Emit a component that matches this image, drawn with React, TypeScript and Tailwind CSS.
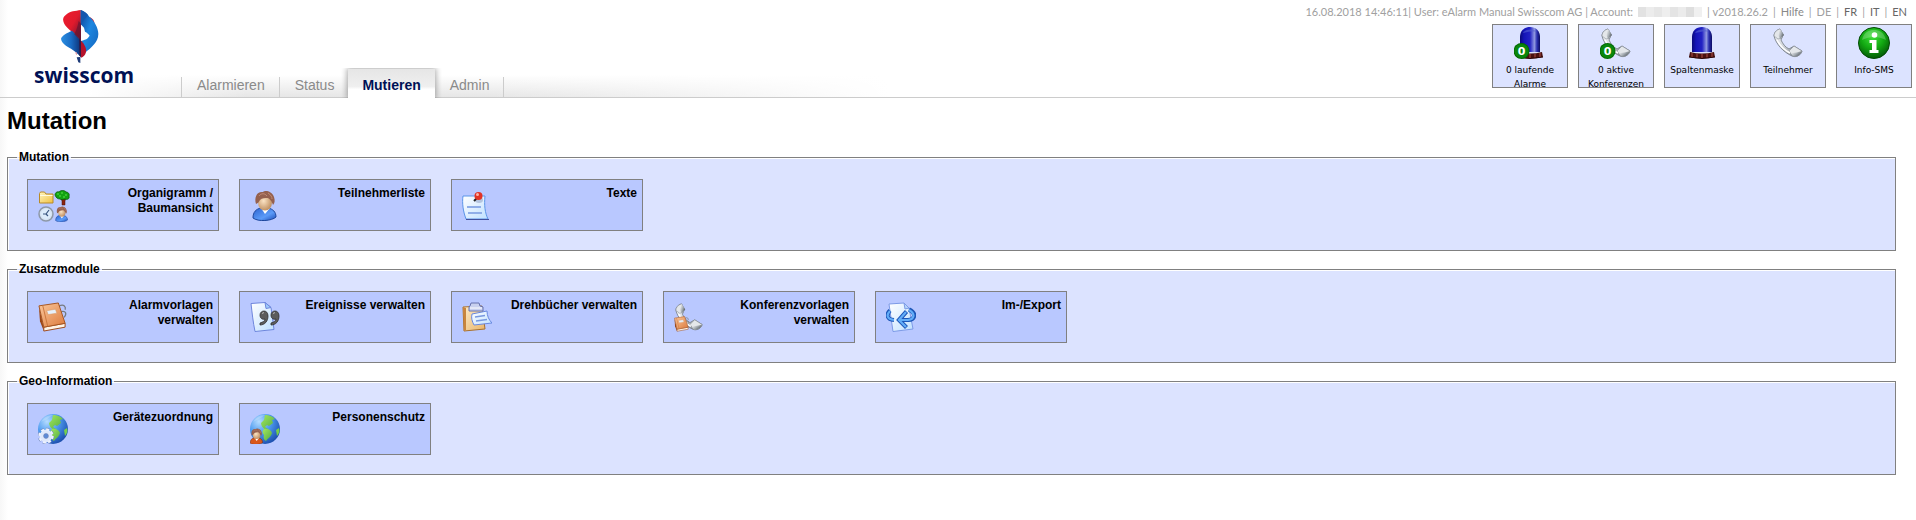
import React from "react";

const sans = "font-['Liberation_Sans',Arial,sans-serif]";

// gradients shared by all icons
function IconDefs() {
  return (
    <svg className="absolute h-0 w-0" aria-hidden="true">
      <defs>
        <linearGradient id="beacon" x1="0" x2="1" y1="0" y2="0">
          <stop offset="0" stopColor="#0a0a78" />
          <stop offset="0.2" stopColor="#1414b8" />
          <stop offset="0.5" stopColor="#2222c4" />
          <stop offset="0.72" stopColor="#8f97e0" />
          <stop offset="0.85" stopColor="#2a2fb0" />
          <stop offset="1" stopColor="#0b0b62" />
        </linearGradient>
        <linearGradient id="metal" x1="0" x2="1" y1="0" y2="1">
          <stop offset="0" stopColor="#ffffff" />
          <stop offset="0.45" stopColor="#d3d7dc" />
          <stop offset="1" stopColor="#6d757d" />
        </linearGradient>
        <linearGradient id="cup" x1="0" x2="1" y1="0.2" y2="0.8">
          <stop offset="0" stopColor="#f6f7f8" />
          <stop offset="0.5" stopColor="#a4abb1" />
          <stop offset="1" stopColor="#434a50" />
        </linearGradient>
        <radialGradient id="green" cx="0.45" cy="0.3" r="0.75">
          <stop offset="0" stopColor="#3fe03a" />
          <stop offset="0.5" stopColor="#12a812" />
          <stop offset="1" stopColor="#024d04" />
        </radialGradient>
        <radialGradient id="globe" cx="0.3" cy="0.25" r="0.85">
          <stop offset="0" stopColor="#b5dcff" />
          <stop offset="0.45" stopColor="#4f9cf0" />
          <stop offset="1" stopColor="#1747a8" />
        </radialGradient>
        <linearGradient id="land" x1="0" x2="1" y1="0" y2="1">
          <stop offset="0" stopColor="#a4e85c" />
          <stop offset="1" stopColor="#4faa45" />
        </linearGradient>
        <linearGradient id="book" x1="0" x2="1" y1="0" y2="1">
          <stop offset="0" stopColor="#fbc89c" />
          <stop offset="1" stopColor="#dc7a3c" />
        </linearGradient>
        <linearGradient id="paper" x1="0" x2="1" y1="0" y2="1">
          <stop offset="0" stopColor="#ffffff" />
          <stop offset="1" stopColor="#bfe0ff" />
        </linearGradient>
        <linearGradient id="shirt" x1="0" x2="1" y1="0" y2="1">
          <stop offset="0" stopColor="#2c63d0" />
          <stop offset="0.6" stopColor="#5c9bf8" />
          <stop offset="1" stopColor="#1c4cb8" />
        </linearGradient>
        <radialGradient id="skin" cx="0.4" cy="0.4" r="0.7">
          <stop offset="0" stopColor="#fbe3c4" />
          <stop offset="1" stopColor="#b98655" />
        </radialGradient>
        <linearGradient id="folder" x1="0" x2="1" y1="0" y2="1">
          <stop offset="0" stopColor="#fff6c0" />
          <stop offset="1" stopColor="#f0c040" />
        </linearGradient>
        <linearGradient id="board" x1="0" x2="1" y1="0" y2="1">
          <stop offset="0" stopColor="#fdeccb" />
          <stop offset="1" stopColor="#e8b468" />
        </linearGradient>
        <linearGradient id="logoRed" x1="0" x2="1" y1="0" y2="1">
          <stop offset="0" stopColor="#ee1c2e" />
          <stop offset="0.5" stopColor="#e01a2c" />
          <stop offset="1" stopColor="#5c1330" />
        </linearGradient>
        <linearGradient id="logoBlue" x1="0" x2="1" y1="0" y2="1">
          <stop offset="0" stopColor="#0d3f96" />
          <stop offset="0.45" stopColor="#1c86e0" />
          <stop offset="1" stopColor="#1260b8" />
        </linearGradient>
        <linearGradient id="logoLeft" x1="0" x2="1" y1="0" y2="0">
          <stop offset="0" stopColor="#2b8fe2" />
          <stop offset="0.5" stopColor="#1a6cc4" />
          <stop offset="1" stopColor="#0c2f74" />
        </linearGradient>
      </defs>
    </svg>
  );
}

function Logo() {
  return (
    <svg className="h-[55px] w-10" viewBox="180 24 120 165" aria-hidden="true">
      <path d="M268 48c10 4 16 12 15 20l-8 2z" fill="#c41c34" />
      <path
        d="M242 27c10 4 18 8 26 20 14 12 27 32 27 52 0 24-22 42-40 56-5 5-9 9-12 14v-49c8-2 15-4 20-8l6-8c-2-4-8-9-14-12l-3-12-10-10z"
        fill="url(#logoBlue)"
      />
      <path d="M242 27c-16 3-32 3-44 14-8 6-10 12-8 20 4 16 20 26 31 36 9 8 15 14 22 22V70z" fill="url(#logoRed)" />
      <path d="M242 27c10 4 16 8 22 16-8 8-16 18-22 30z" fill="#1457ae" />
      <path d="M216 89c-14 6-30 14-33 24 2 14 16 22 30 30 12 8 22 16 30 26v-50c-8-10-16-20-27-30z" fill="url(#logoLeft)" />
      <path d="M236 60l7 8v52c-8-8-14-14-20-20 6-12 10-24 13-40z" fill="#6a1532" opacity="0.75" />
      <path d="M243 119c10 10 17 22 15 34-2 10-8 15-15 17z" fill="#b5122b" />
      <path d="M237 110l6 9v50l-5-6z" fill="#35163f" opacity="0.8" />
      <path d="M226 152l5 3v8l-4-4z" fill="#e8a0a8" />
      <path d="M230 169l11-1v18l-6-2-2-6z" fill="#1d3a78" />
    </svg>
  );
}

function Badge() {
  return (
    <>
      <circle cx="7.5" cy="24" r="8" fill="#026b04" />
      <circle cx="7.5" cy="24" r="7" fill="#0a870c" />
      <text
        x="7.5"
        y="28"
        textAnchor="middle"
        fontSize="11"
        fontWeight="bold"
        fill="#fff"
        fontFamily="DejaVu Sans, sans-serif"
      >
        0
      </text>
    </>
  );
}

function BeaconShape() {
  return (
    <>
      <path d="M6 25V10C6 4 10 0 16 0s10 4 10 10v15z" fill="url(#beacon)" />
      <path d="M9 6c2-4 10-5 14-1-4-1-9 0-14 1z" fill="#5560d0" opacity="0.6" />
      <path d="M4 25q12 3 24 0l1 5q-13 3-26 0z" fill="#4a1210" />
      <path d="M6 26v4M11 27v4M16 27v4M21 27v4M26 26v4" stroke="#8d3a34" strokeWidth="1.5" />
      <path d="M3 30q13 3 26 0" stroke="#2b0505" fill="none" />
    </>
  );
}

function HandsetShape() {
  return (
    <>
      <path
        d="M8 2C4 3 2 6 2 9c2 8 9 16 18 20 4 2 9-1 10-5l-8-5-5 3c-4-2-6-5-8-9l2-5z"
        fill="url(#metal)"
        stroke="#6e767e"
        strokeWidth="0.8"
      />
      <path d="M8 2l3 5-1 4-4 1-4-3c0-3 2-6 6-7z" fill="#e4e7ea" stroke="#767e86" strokeWidth="0.5" />
      <path d="M8 2l4 6-4 4c-2-3-2-7 0-10z" fill="url(#cup)" />
      <path d="M17 24l5-5 8 5c-1 4-5 6-9 5z" fill="#e4e7ea" stroke="#767e86" strokeWidth="0.5" />
      <path d="M19 26c4 0 7-1 11-2-1 4-5 6-9 5z" fill="url(#cup)" />
      <path d="M5 13c3 6 7 10 13 13" stroke="#fff" strokeWidth="1.5" fill="none" />
    </>
  );
}

function AlarmIcon() {
  return (
    <svg className="h-8 w-8" viewBox="0 0 32 32">
      <BeaconShape />
      <Badge />
    </svg>
  );
}

function ConferenceIcon() {
  return (
    <svg className="h-8 w-8" viewBox="0 0 32 32">
      <HandsetShape />
      <Badge />
    </svg>
  );
}

function BeaconIcon() {
  return (
    <svg className="h-8 w-8" viewBox="0 0 32 32">
      <BeaconShape />
    </svg>
  );
}

function PhoneIcon() {
  return (
    <svg className="h-8 w-8" viewBox="0 0 32 32">
      <HandsetShape />
    </svg>
  );
}

function InfoIcon() {
  return (
    <svg className="h-8 w-8" viewBox="0 0 32 32">
      <circle cx="16" cy="16" r="15.5" fill="url(#green)" stroke="#034a05" />
      <path d="M4 13C6 5 11 3 16 3s10 2 12 10c-8-4-16-4-24 0z" fill="#fff" opacity="0.22" />
      <circle cx="16.5" cy="8" r="2.8" fill="#fff" />
      <path d="M11.500 13h7v10h2v3h-9v-3h2.500v-7h-2.500z" fill="#fff" />
    </svg>
  );
}

function PersonShape({ shirt = "url(#shirt)", line = "#1d469c" }) {
  return (
    <>
      <path d="M4 28c0-6 3-9 8-10h7c5 1 8 4 8 9-4 4-18 5-23 1z" fill={shirt} stroke={line} />
      <path d="M12 18l4 6 5-6z" fill="#fff" />
      <ellipse cx="16" cy="12.500" rx="7" ry="8" fill="url(#skin)" />
      <path
        d="M7 14C5 7 8 1 14 2c2-2 9-1 11 5 1 3 1 6-1 8-1-3-2-5-5-7-3 0-6 0-8 2-1 2-2 3-4 4z"
        fill="#95604e"
      />
      <path d="M10 6c2-3 6-3 8 0M19 3c3 2 4 4 4 6" stroke="#c08a74" fill="none" />
    </>
  );
}

function OrgIcon() {
  return (
    <svg className="h-8 w-8" viewBox="0 0 32 32">
      <path d="M1.500 13V3.500l1-1.500h4l1.500 2h7v9z" fill="url(#folder)" stroke="#b98a28" />
      <path d="M2 5.500h12.500" stroke="#fffbe0" />
      <path d="M23 8l1 3v4h3v-4l1-3z" fill="#8c2410" stroke="#4b1004" strokeWidth="0.5" />
      <path
        d="M17 5c0-2 2-4 4-3 1-2 6-2 7 0 2 0 4 2 3 4 1 3-2 4-4 3-2 1-4 1-5 0-2 0-4-1-5-4z"
        fill="#12a312"
        stroke="#064d06"
        strokeWidth="0.700"
      />
      <path d="M19 4h2M23 3h2M27 5h2M21 6h2M25 7h2" stroke="#5ae04a" />
      <circle cx="8" cy="24" r="7" fill="#d5e2f2" stroke="#8d98a8" strokeWidth="1.500" />
      <circle cx="8" cy="24" r="5" fill="#dcebfb" />
      <path d="M8 24l3-4M8 24H5M8 24l2 2" stroke="#3a5680" strokeWidth="1.200" />
      <g transform="translate(15.500 16) scale(0.52)">
        <PersonShape />
      </g>
    </svg>
  );
}

function PersonIcon() {
  return (
    <svg className="h-8 w-8" viewBox="0 0 32 32">
      <g transform="translate(-1 0)">
        <PersonShape />
      </g>
    </svg>
  );
}

function NoteIcon() {
  return (
    <svg className="h-8 w-8" viewBox="0 0 32 32">
      <path d="M1 6h22c-1 9 0 17 3 23H4C1 21 0 13 1 6z" fill="url(#paper)" stroke="#5b95e8" />
      <path d="M4 29.500h23" stroke="#41509c" />
      <path d="M5 17h14M6 23h14" stroke="#8faee8" strokeWidth="1.800" />
      <ellipse cx="17" cy="10" rx="4" ry="3" fill="#9fb0d0" opacity="0.7" />
      <path d="M12 11l4-4" stroke="#222" strokeWidth="2" />
      <circle cx="16.500" cy="6" r="4" fill="#e23325" />
      <circle cx="15.500" cy="4.500" r="1.500" fill="#ffb2a4" />
    </svg>
  );
}

function BookShape() {
  return (
    <>
      <path d="M22 4c5-2 7 1 6 4M24 10c5-1 6 2 3 6" stroke="#767a80" fill="none" strokeWidth="1.300" />
      <path d="M1 5l5 21v4L2 20z" fill="#9c4718" />
      <path d="M6 30l22-4v-4L6 26z" fill="#fff4e6" stroke="#9c4718" />
      <path d="M1 4l20-3 7 21-22 4z" fill="url(#book)" stroke="#a5541f" />
      <path d="M5 4l5 21" stroke="#c9763e" />
      <path d="M9 9l9-1.500 1.500 4L10.500 13z" fill="#e7f1fb" stroke="#d5955f" strokeWidth="0.500" />
    </>
  );
}

function BookIcon() {
  return (
    <svg className="h-[30px] w-[30px]" viewBox="0 0 31 31">
      <BookShape />
    </svg>
  );
}

function QuoteIcon() {
  return (
    <svg className="h-[30px] w-[30px]" viewBox="0 0 30 30">
      <path d="M1 1.500L15 .5l6 5 3 22L5 29.500C3 20 2 10 1 1.500z" fill="url(#paper)" stroke="#6e86dc" />
      <path d="M15 .5l1 6 5-1z" fill="#9ecbfa" stroke="#6e86dc" />
      <g fill="#5c5c5c" stroke="#303030" strokeWidth="0.800">
        <path d="M10 13c0-5 8-6 8 1 0 5-3 9-8 9v-2c3-1 5-2 5-4-3 1-5-1-5-4z" />
        <path d="M21 13c0-5 8-6 8 1 0 5-3 9-8 9v-2c3-1 5-2 5-4-3 1-5-1-5-4z" />
      </g>
      <path d="M12 11.500l2-1M23 11.500l2-1" stroke="#bbb" />
    </svg>
  );
}

function ClipboardIcon() {
  return (
    <svg className="h-[30px] w-[30px]" viewBox="0 0 30 30">
      <path d="M1 5l19-1 3 23-21 2z" fill="url(#board)" stroke="#a8702c" />
      <path d="M1 5l3 1v22l-2 1z" fill="#c8843c" />
      <path d="M8 4l1-3h8l1 3 3 1v4H7V5z" fill="#c8d0ee" stroke="#6672ae" />
      <path d="M8 6h12" stroke="#fff" />
      <path d="M10 12l15-3c0 5 2 9 5 12l-18 2c-2-4-3-7-2-11z" fill="url(#paper)" stroke="#6888e0" />
      <path d="M13 15l10-1.500M14 19l11-1.500" stroke="#7898e0" strokeWidth="1.300" />
    </svg>
  );
}

function PhoneBookIcon() {
  return (
    <svg className="h-[30px] w-[30px]" viewBox="0 0 32 32">
      <HandsetShape />
      <g transform="translate(0 15) scale(0.54)">
        <BookShape />
      </g>
    </svg>
  );
}

function ExchangeIcon() {
  return (
    <svg className="h-[30px] w-[30px]" viewBox="0 0 30 30">
      <path d="M3 2l15-1 5 5 4 21-20 2.500z" fill="url(#paper)" stroke="#7c9ae6" />
      <path d="M18 1l1 6 4-1z" fill="#b5d6fa" stroke="#7c9ae6" />
      <g fill="none">
        <path
          d="M4 8.500c-4 4-3 9 4 9.500M23 7.500c8 4 6 10-1 10.500h-8M20.500 9.500L13 18l7.500 7.500"
          stroke="#1c56b8"
          strokeWidth="4.200"
        />
        <path
          d="M4 9c-4 4-3 8 4 9M23 8c7 4 5 9.500-1 10h-8M20 10l-7 8 7 7"
          stroke="#62adf8"
          strokeWidth="2.200"
        />
      </g>
    </svg>
  );
}

function GlobeShape() {
  return (
    <>
      <circle cx="15" cy="15" r="15" fill="url(#globe)" />
      <path d="M15 1c4 0 7 1 10 4l-3 1 1 3-4 3-2-1-2 2 3 2-2 1c-3-2-5-4-5-7l3-3z" fill="url(#land)" />
      <path d="M14 15c4-1 7 1 8 4-1 4-4 5-6 8-2-1-3-3-2-6-2-2-2-4 0-6z" fill="url(#land)" />
      <path d="M26 16l3-2c1 3 0 6-2 8z" fill="#74cf4a" />
      <path d="M3 8C6 3 10 1 15 1c-4 3-8 5-12 7z" fill="#fff" opacity="0.2" />
    </>
  );
}

function GlobeGearIcon() {
  return (
    <svg className="h-[30px] w-[30px]" viewBox="0 0 30 30">
      <GlobeShape />
      <circle cx="8" cy="22" r="6.700" fill="none" stroke="#6b80b8" strokeWidth="3" strokeDasharray="3 2.260" />
      <circle cx="8" cy="22" r="4.200" fill="none" stroke="#dfe8fb" strokeWidth="4.400" />
      <circle cx="8" cy="22" r="6.700" fill="none" stroke="#eef3ff" strokeWidth="2" strokeDasharray="3 2.260" />
      <circle cx="8" cy="22" r="2.400" fill="#5b8ad8" stroke="#7286b8" strokeWidth="0.700" />
    </svg>
  );
}

function GlobePersonIcon() {
  return (
    <svg className="h-[30px] w-[30px]" viewBox="0 0 30 30">
      <GlobeShape />
      <g transform="translate(-2 14) scale(0.54)">
        <PersonShape shirt="#d9571a" line="#7c2a08" />
      </g>
    </svg>
  );
}

const tabs = ["Alarmieren", "Status", "Mutieren", "Admin"];

const shortcuts = [
  { label: "0 laufende Alarme", icon: <AlarmIcon /> },
  { label: "0 aktive Konferenzen", icon: <ConferenceIcon /> },
  { label: "Spaltenmaske", icon: <BeaconIcon /> },
  { label: "Teilnehmer", icon: <PhoneIcon /> },
  { label: "Info-SMS", icon: <InfoIcon /> },
];

const groups = [
  {
    title: "Mutation",
    items: [
      { label: "Organigramm / Baumansicht", icon: <OrgIcon /> },
      { label: "Teilnehmerliste", icon: <PersonIcon /> },
      { label: "Texte", icon: <NoteIcon /> },
    ],
  },
  {
    title: "Zusatzmodule",
    items: [
      { label: "Alarmvorlagen verwalten", icon: <BookIcon /> },
      { label: "Ereignisse verwalten", icon: <QuoteIcon /> },
      { label: "Drehbücher verwalten", icon: <ClipboardIcon /> },
      { label: "Konferenzvorlagen verwalten", icon: <PhoneBookIcon /> },
      { label: "Im-/Export", icon: <ExchangeIcon /> },
    ],
  },
  {
    title: "Geo-Information",
    items: [
      { label: "Gerätezuordnung", icon: <GlobeGearIcon /> },
      { label: "Personenschutz", icon: <GlobePersonIcon /> },
    ],
  },
];

const maskColors = [
  "bg-[#e2e2e2]",
  "bg-[#ececec]",
  "bg-[#e6e6e6]",
  "bg-[#eeeeee]",
  "bg-[#e4e4e4]",
  "bg-[#ebebeb]",
  "bg-[#dedede]",
  "bg-[#f0f0f0]",
];

function Tab({ label }: { label: string }) {
  if (label === "Mutieren") {
    return (
      <a
        href="#"
        aria-current="page"
        className="-mb-px flex h-[29px] items-center bg-[linear-gradient(#e6e6e6,#efefef_60%,#fff_70%)] px-[14px] pt-[2px] font-bold text-[#001155] shadow-[0_0_6px_1px_rgba(0,0,0,0.35)] [clip-path:inset(-1px_-7px_0_-7px)]"
      >
        {label}
      </a>
    );
  }
  return (
    <a
      href="#"
      className={
        "flex h-5 items-center pr-[14px] pb-1 pl-[15px] text-[#8a8a8a] " +
        (label === "Status" ? "" : "border-r border-[#cccccc]")
      }
    >
      {label}
    </a>
  );
}

function Header() {
  return (
    <header className="flex h-[98px] border-b border-[#cccccc] bg-[linear-gradient(to_right,#fff,transparent_20%,transparent_50%,#fff),linear-gradient(#fff,#e6e6e6)] bg-size-[800px_22px] bg-[position:88px_100%] bg-no-repeat">
      {/* logo */}
      <a href="#" className="flex w-[181px] shrink-0 flex-col items-start pt-[9px] pl-[34px]">
        <span className="flex w-[100px] justify-center pr-[8px]">
          <Logo />
        </span>
        <span className="-mt-[3px] font-['Open_Sans','Noto_Sans',sans-serif] text-[21px] leading-7 font-bold text-[#001155]">
          swisscom
        </span>
      </a>
      {/* navbar */}
      <nav className={`${sans} flex h-5 items-end self-end border-l border-[#cccccc] text-sm`}>
        {tabs.map((tab) => (
          <Tab key={tab} label={tab} />
        ))}
      </nav>
      {/* session info and shortcuts */}
      <div className="ml-auto flex flex-col items-end pr-1">
        <div className="flex h-6 items-center gap-[5px] pr-[5px] font-['Lato','Open_Sans',sans-serif] text-[11px] whitespace-nowrap text-[#a0a0a0]">
          <span>16.08.2018 14:46:11| User: eAlarm Manual Swisscom AG | Account:</span>
          <span className="flex h-[10px]">
            {maskColors.map((color) => (
              <span key={color} className={`w-2 ${color}`} />
            ))}
          </span>
          <span>| v2018.26.2</span>
          <span>|</span>
          <a href="#" className="text-[#888888]">Hilfe</a>
          <span>|</span>
          <span>DE</span>
          <span>|</span>
          <a href="#" className="text-[#666666]">FR</a>
          <span>|</span>
          <a href="#" className="text-[#666666]">IT</a>
          <span>|</span>
          <a href="#" className="text-[#666666]">EN</a>
        </div>
        <div className="flex gap-[10px]">
          {shortcuts.map((item) => (
            <button
              key={item.label}
              className="flex h-16 w-[76px] flex-col items-center overflow-hidden border border-[#808080] bg-[#dce3ff] px-1 pt-[2px] font-['DejaVu_Sans',Verdana,sans-serif] text-[9px] leading-[14px] text-black"
            >
              <span className="mb-1 shrink-0">{item.icon}</span>
              {item.label}
            </button>
          ))}
        </div>
      </div>
    </header>
  );
}

function App() {
  return (
    <div className={`${sans} min-h-screen bg-[linear-gradient(to_right,#f7f7f7,#fff_8px)] text-black`}>
      <IconDefs />
      <Header />
      <main className="flex flex-col pr-5 pb-10 pl-[7px]">
        <h1 className="mb-[11px] pt-[5px] text-2xl leading-9 font-bold">Mutation</h1>
        <div className="flex flex-col gap-[11px]">
          {groups.map((group) => (
            <fieldset
              key={group.title}
              className="border border-[#808080] bg-[#dce3ff] px-[9px] pb-[19px] shadow-[inset_1px_1px_0_#fff]"
            >
              <legend className="px-[2px] text-xs leading-[15px] font-bold">{group.title}</legend>
              <div className="flex flex-wrap gap-5 px-[10px] pt-[14px]">
                {group.items.map((item) => (
                  <a
                    key={item.label}
                    href="#"
                    className="flex h-[52px] w-48 items-start justify-between border border-[#808080] bg-[#b9c8ff] pr-[5px] pl-[10px]"
                  >
                    <span className="shrink-0 pt-[10px]">{item.icon}</span>
                    <span className="w-[130px] pt-[6px] text-right text-xs leading-[15px] font-bold">
                      {item.label}
                    </span>
                  </a>
                ))}
              </div>
            </fieldset>
          ))}
        </div>
      </main>
    </div>
  );
}

export default App;
